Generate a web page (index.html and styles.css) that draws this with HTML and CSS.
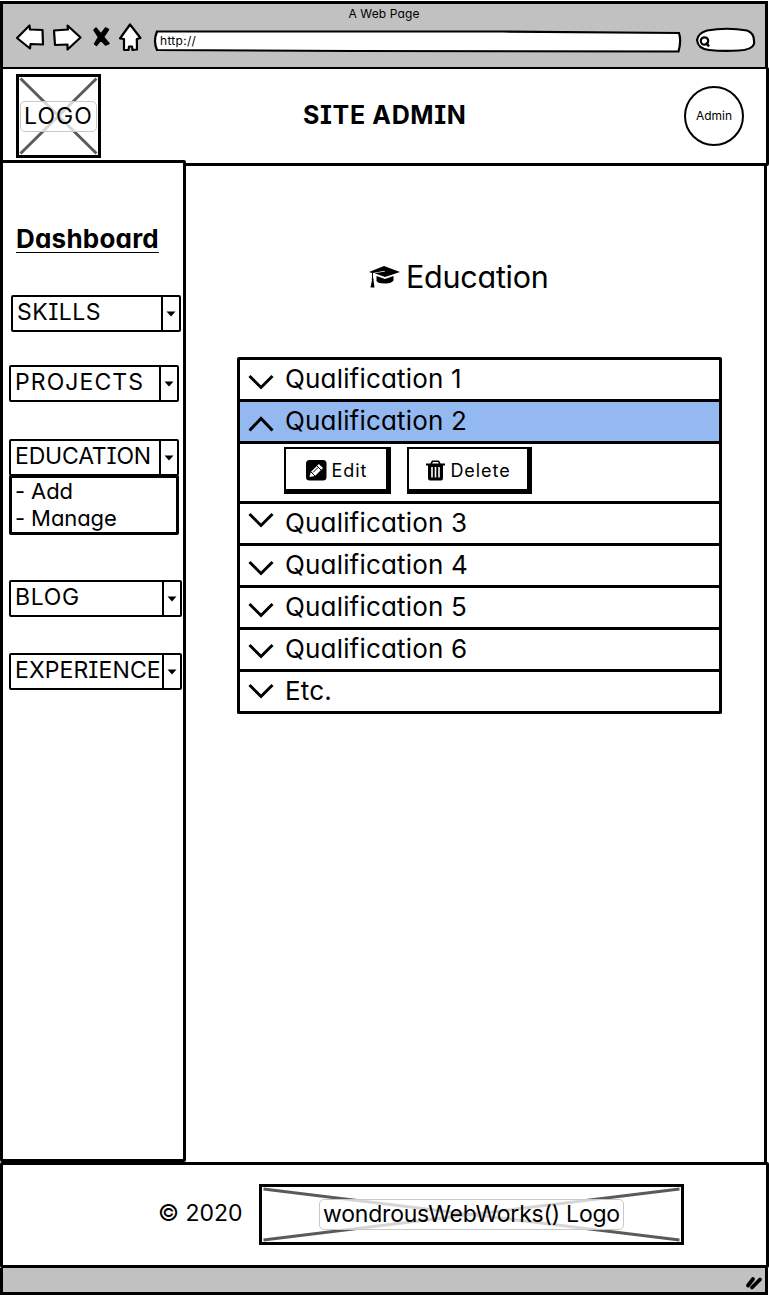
FILE: index.html
```html
<!DOCTYPE html>
<html lang="en">
<head>
<meta charset="utf-8">
<title>A Web Page</title>
<link rel="stylesheet" href="styles.css">
</head>
<body>
<div class="window">
  <div class="chrome">
    <div class="title">A Web Page</div>
    <div class="toolbar">
      <svg class="nav" width="136" height="32" viewBox="0 0 136 32">
        <g fill="#fff" stroke="#000" stroke-width="2.2" stroke-linejoin="round">
          <path d="M2 16 L14.500 3.500 L15 7.500 L27.500 8 L28 22.500 L15.500 22 L15 26.500 Z"/>
          <path d="M39 8.500 L53 7.500 L52.500 3.500 L65.500 15.500 L52.500 27.500 L52.500 22.500 L40 23 Z"/>
          <path d="M115 2.500 L125.500 16 L121.800 17 L122 27.500 L117.500 28 L117 24.500 L114 24.500 L113.500 28 L109 27.800 L109 17 L105 16.500 Z"/>
        </g>
        <path d="M81 6 L86 12 L90.500 6 L93.500 7.500 L88.500 15 L94 21.500 L90.500 23 L85.800 18 L81.500 23.500 L79.500 22 L83.500 15 L79 8Z" stroke="#000" stroke-width="1.500" stroke-linejoin="round"/>
      </svg>
      <svg class="address" width="530" height="24" viewBox="0 0 530 24">
        <path d="M4 2.500 L350 2.500 L526 4 Q528.500 12 525.500 22.500 L200 22 L4 21 Q0 12 4 2.500Z" fill="#fff" stroke="#000" stroke-width="2.200"/>
        <text x="7" y="16">http://</text>
      </svg>
      <svg class="search" width="62" height="26" viewBox="0 0 62 26">
        <path d="M12 3.500 Q32 0 52 3.500 Q60 6 59 17 Q57 23 44 23.500 Q28 24.500 14 23 Q3 22 2 13 Q3 6 12 3.500Z" fill="#fff" stroke="#000" stroke-width="2.200"/>
        <circle cx="9.500" cy="14" r="3.700" fill="none" stroke="#000" stroke-width="2.200"/>
        <path d="M11 15.500 L14 19.500" stroke="#000" stroke-width="2.400"/>
      </svg>
    </div>
  </div>

  <header class="header">
    <div class="placeholder logo">
      <svg class="cross" viewBox="0 0 79 78" preserveAspectRatio="none"><path d="M1.500 1.500 L77.500 76.500 M77.500 1.500 L1.500 76.500"/></svg>
      <span class="label">LOGO</span>
    </div>
    <h1 class="site-title">SITE ADMIN</h1>
    <div class="avatar">Admin</div>
  </header>

  <div class="body">
    <nav class="sidebar">
      <h2 class="dash">Dashboard</h2>
      <div class="select skills"><span class="value">SKILLS</span><span class="arrow"><svg width="10" height="6"><path d="M.500 .500 H9.500 L5 5.500Z"/></svg></span></div>
      <div class="select projects"><span class="value">PROJECTS</span><span class="arrow"><svg width="10" height="6"><path d="M.500 .500 H9.500 L5 5.500Z"/></svg></span></div>
      <div class="select education"><span class="value">EDUCATION</span><span class="arrow"><svg width="10" height="6"><path d="M.500 .500 H9.500 L5 5.500Z"/></svg></span></div>
      <ul class="menu"><li>- Add</li><li>- Manage</li></ul>
      <div class="select blog"><span class="value">BLOG</span><span class="arrow"><svg width="10" height="6"><path d="M.500 .500 H9.500 L5 5.500Z"/></svg></span></div>
      <div class="select experience"><span class="value">EXPERIENCE</span><span class="arrow"><svg width="10" height="6"><path d="M.500 .500 H9.500 L5 5.500Z"/></svg></span></div>
    </nav>
    <main class="main">
      <h2 class="heading">
        <svg width="31" height="22" viewBox="0 0 31 22"><path d="M15 0 L31 6 L16 11 L5.500 7.300 L16 5.500 L15.500 4.800 L4 7 V12 Q5 13 4.500 14 L5.500 21.500 H1.500 L3 14 Q2 13 3 12 V7 L0 6Z"/><path d="M7.500 10 L16 13 L24.500 10 V14.500 Q22 18 15.500 17.500 Q9 17.500 7.500 15Z"/></svg>
        <span>Education</span>
      </h2>
      <div class="accordion">
        <div class="row"><svg class="chev" width="28" height="16"><path d="M2.500 2 L14 13.500 L25.500 2"/></svg><span>Qualification 1</span></div>
        <div class="row active"><svg class="chev" width="28" height="16"><path d="M2.500 14.500 L14 2.500 L25.500 14.500"/></svg><span>Qualification 2</span></div>
        <div class="panel">
          <button class="btn edit"><svg width="21" height="21" viewBox="0 0 21 21"><rect width="20.500" height="20.500" rx="3.500"/><path d="M3.500 17 L4.800 12 L12.800 4 L17 8 L9 16Z" fill="#fff"/><path d="M11 6 L15 10 M5 12 L9 16 M7 12.500 L12 7.500" stroke="#000" stroke-width="1" fill="none"/></svg><span>Edit</span></button>
          <button class="btn delete"><svg width="19" height="21" viewBox="0 0 19 21"><path d="M5 4 L6.500 1.200 H12.500 L14 4" fill="none" stroke="#000" stroke-width="1.600"/><path d="M0 3.500 H19 V5.500 H17 V18 Q17 20.500 15 20.500 H4 Q2 20.500 2 18 V5.500 H0Z"/><path d="M6 7 V17.500 M9.500 7 V17.500 M13 7 V17.500" stroke="#fff" stroke-width="1.600"/></svg><span>Delete</span></button>
        </div>
        <div class="row raised"><svg class="chev" width="28" height="16"><path d="M2.500 2 L14 13.500 L25.500 2"/></svg><span>Qualification 3</span></div>
        <div class="row"><svg class="chev" width="28" height="16"><path d="M2.500 2 L14 13.500 L25.500 2"/></svg><span>Qualification 4</span></div>
        <div class="row"><svg class="chev" width="28" height="16"><path d="M2.500 2 L14 13.500 L25.500 2"/></svg><span>Qualification 5</span></div>
        <div class="row q6"><svg class="chev" width="28" height="16"><path d="M2.500 2 L14 13.500 L25.500 2"/></svg><span>Qualification 6</span></div>
        <div class="row etc"><svg class="chev" width="28" height="16"><path d="M2.500 2 L14 13.500 L25.500 2"/></svg><span>Etc.</span></div>
      </div>
    </main>
  </div>

  <footer class="footer">
    <span class="copy">© 2020</span>
    <div class="placeholder brand">
      <svg class="cross" viewBox="0 0 419 55" preserveAspectRatio="none"><path d="M1.500 2 L417.500 53 M417.500 2 L1.500 53"/></svg>
      <span class="label">wondrousWebWorks() Logo</span>
    </div>
  </footer>
  <div class="statusbar">
    <svg width="20" height="16" viewBox="0 0 20 16"><path d="M3 9.500 L8 3 M7 11.500 L15 3.500" stroke="#000" stroke-width="3.800" stroke-linecap="round"/></svg>
  </div>
</div>
</body>
</html>
```
FILE: styles.css
```css
* { box-sizing: border-box; }
body { margin: 0; background: #fff; color: #000; font-family: Inter, "Noto Sans", sans-serif; font-feature-settings: "cv11", "cv08"; font-size: 23px; }
h1, h2, ul { margin: 0; padding: 0; }
svg { display: block; flex: none; }
.window { width: 769px; height: 1295px; padding-top: 1px; display: flex; flex-direction: column; }
.chrome { width: 768px; height: 67px; flex: none; background: #c1c1c1; border: 3px solid #000; border-bottom: 0; }
.title { height: 20px; text-align: center; font-size: 12px; line-height: 19px; letter-spacing: .11px; }
.toolbar { display: flex; }
.nav { margin: -2px 0 0 12px; }
.address { margin: 5px 0 0 2px; }
.address text { font-size: 12px; letter-spacing: .3px; }
.search { margin: 3px 0 0 12px; }

.header { width: 769px; height: 99px; flex: none; border: 3px solid #000; border-top-width: 2px; margin-top: -1px; display: grid; grid-template-columns: 1fr 174px 1fr; align-items: center; padding: 0 22px 0 13px; border-radius: 2px; }
.placeholder { border: 3px solid #000; display: grid; place-items: center; }
.cross { grid-area: 1 / 1; width: 100%; height: 100%; fill: none; stroke: #5a5a5a; stroke-width: 3; }
.label { grid-area: 1 / 1; border: 1px solid #c8c8c8; border-radius: 5px; background: rgba(255,255,255,.75); z-index: 1; height: 31px; line-height: 28px; text-align: center; white-space: nowrap; }
.logo { width: 85px; height: 84px; }
.logo .label { width: 77px; letter-spacing: 1.1px; }
.site-title { font-size: 25px; line-height: 30px; letter-spacing: .65px; white-space: nowrap; padding: 0 0 2px 10px; }
.avatar { justify-self: end; width: 60px; height: 60px; border: 2px solid #000; border-radius: 50%; text-align: center; font-size: 12px; line-height: 56px; }

.body { width: 767px; height: 997px; flex: none; display: grid; grid-template-columns: 186px 1fr; border-right: 3px solid #000; margin-bottom: -1px; }
.sidebar { margin-top: -6px; height: 1002px; background: #fff; border: 3px solid #000; padding: 59px 0 0 6px; position: relative; border-radius: 2px; }
.dash { width: 143px; margin-left: 7px; height: 31px; font-size: 26px; line-height: 33px; letter-spacing: .22px; border-bottom: 1px solid #000; }
.select { width: 170px; height: 37px; border: 2px solid #000; display: grid; grid-template-columns: 1fr 18px; border-radius: 2px; }
.value { overflow: hidden; padding-left: 4px; line-height: 30px; }
.arrow { border-left: 2px solid #000; display: grid; place-items: center; }
.skills { margin: 42px 0 0 2px; letter-spacing: .48px; }
.projects { margin-top: 33px; letter-spacing: 1.07px; }
.education { margin-top: 37px; letter-spacing: -.19px; }
.menu { width: 170px; height: 60px; margin-top: -1px; border: 3px solid #000; list-style: none; padding-left: 3px; font-size: 22px; line-height: 27px; letter-spacing: -.1px; border-radius: 2px; }
.blog { width: 173px; margin-top: 45px; letter-spacing: .71px; }
.experience { width: 173px; margin-top: 36px; letter-spacing: .1px; }

.main { padding: 93px 0 0 51px; }
.heading { display: flex; gap: 6px; align-items: center; font-weight: 400; font-size: 30.500px; height: 36px; line-height: 36px; letter-spacing: -.25px; margin-left: 132px; }
.accordion { width: 485px; margin-top: 62px; border: 3px solid #000; border-top: 0; border-radius: 2px; }
.row { height: 42px; border-top: 3px solid #000; display: flex; align-items: center; padding: 0 0 2px 7px; gap: 10px; font-size: 26px; letter-spacing: .17px; }
.active { background: #94b9f1; }
.chev { fill: none; stroke: #000; stroke-width: 3; margin-top: 6px; }
.raised .chev { margin-top: -5px; }
.q6 .chev { margin-top: 4px; }
.etc .chev { margin-top: 1px; }
.panel { height: 60px; border-top: 3px solid #000; display: flex; gap: 16px; padding: 3px 0 0 44px; }
.btn { width: 107px; height: 47px; font: inherit; font-feature-settings: inherit; font-size: 18px; color: #000; background: #fff; border: 2px solid #000; border-width: 2px 5px 5px 2px; padding: 2px 0 0 1px; display: flex; align-items: center; justify-content: center; gap: 5px; letter-spacing: .95px; }
.delete { width: 125px; }

.footer { width: 769px; height: 106px; flex: none; border: 3px solid #000; border-radius: 2px; display: flex; align-items: center; padding: 0 0 1px 155px; gap: 16px; }
.copy { width: 85px; white-space: nowrap; line-height: 28px; padding-bottom: 3px; }
.brand { width: 425px; height: 61px; }
.brand .label { width: 305px; letter-spacing: -.21px; }
.statusbar { width: 768px; height: 27px; flex: none; border: 3px solid #000; border-top: 0; background: #c1c1c1; display: flex; justify-content: flex-end; align-items: flex-end; }
```
